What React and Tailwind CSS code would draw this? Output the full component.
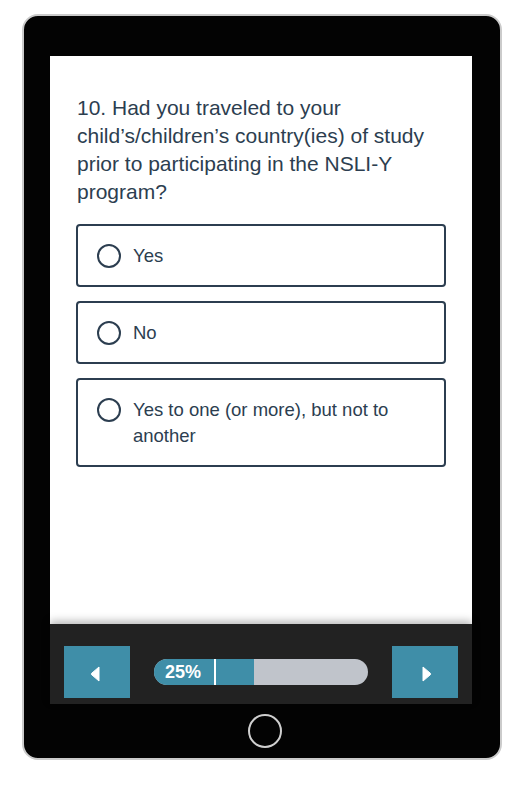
export default function App() {
  const font = { fontFamily: '"Liberation Sans", Arial, sans-serif' };
  const options = ["Yes", "No", "Yes to one (or more), but not to another"];
  return (
    <div className="bg-white w-[514px] h-[800px] pt-[14px] pl-[22px]" style={font}>
      <div className="w-[480px] h-[746px] rounded-[16px] border-2 border-[#cbcbcb] bg-[#030303] pt-[40px] pl-[26px] flex flex-col">
        <div className="w-[422px] h-[568px] bg-white pt-[38px] px-[26px]">
          <p className="text-[21px] leading-[28px] text-[#2c3e50] pl-[1px] pr-[10px]">
            10. Had you traveled to your child’s/children’s country(ies) of study prior to participating in the NSLI-Y program?
          </p>
          <div className="mt-[18px] flex flex-col gap-[14px] w-[370px]">
            {options.map((o) => (
              <div
                key={o}
                className="border-2 border-[#2c3e50] rounded-[4px] pt-[17px] pb-[16px] pl-[19px] pr-[20px] flex items-start gap-[12px]"
              >
                <span className="mt-[1px] w-[24px] h-[24px] shrink-0 rounded-full border-[2.5px] border-[#2c3e50]" />
                <span className="text-[18.5px] leading-[26px] text-[#2c3e50]">{o}</span>
              </div>
            ))}
          </div>
        </div>
        <div className="w-[422px] h-[80px] bg-[#222222] pt-[22px] pb-[6px] px-[14px] flex items-center justify-between shadow-[0_-3px_8px_rgba(0,0,0,0.28)] relative">
          <div className="w-[66px] h-[52px] bg-[#3f8ea8] flex items-center justify-center">
            <svg width="10" height="16" viewBox="0 0 10 16" className="mt-[3px] mr-[4px]">
              <path d="M9 1 L9 15 L1.5 8.6 Q1 8 1.5 7.4 Z" fill="#fff" stroke="#fff" strokeWidth="1" strokeLinejoin="round" />
            </svg>
          </div>
          <div className="w-[214px] h-[26px] rounded-full bg-[#c0c4cb] overflow-hidden flex relative">
            <div className="w-[100px] h-full bg-[#3f8ea8] flex items-center">
              <span className="pl-[11px] text-white text-[18px] leading-none" style={{ fontFamily: '"Liberation Sans", Arial, sans-serif', fontWeight: 600 }}>25%</span>
              <span className="ml-[13px] w-[2px] h-full bg-white" />
            </div>
          </div>
          <div className="w-[66px] h-[52px] bg-[#3f8ea8] flex items-center justify-center">
            <svg width="10" height="16" viewBox="0 0 10 16" className="mt-[3px] ml-[4px]">
              <path d="M1 1 L1 15 L8.5 8.6 Q9 8 8.5 7.4 Z" fill="#fff" stroke="#fff" strokeWidth="1" strokeLinejoin="round" />
            </svg>
          </div>
        </div>
        <div className="w-[422px] flex justify-center pt-[10px] pl-[8px]">
          <div className="w-[34px] h-[34px] rounded-full border-2 border-[#cfcfcf]" />
        </div>
      </div>
    </div>
  );
}
